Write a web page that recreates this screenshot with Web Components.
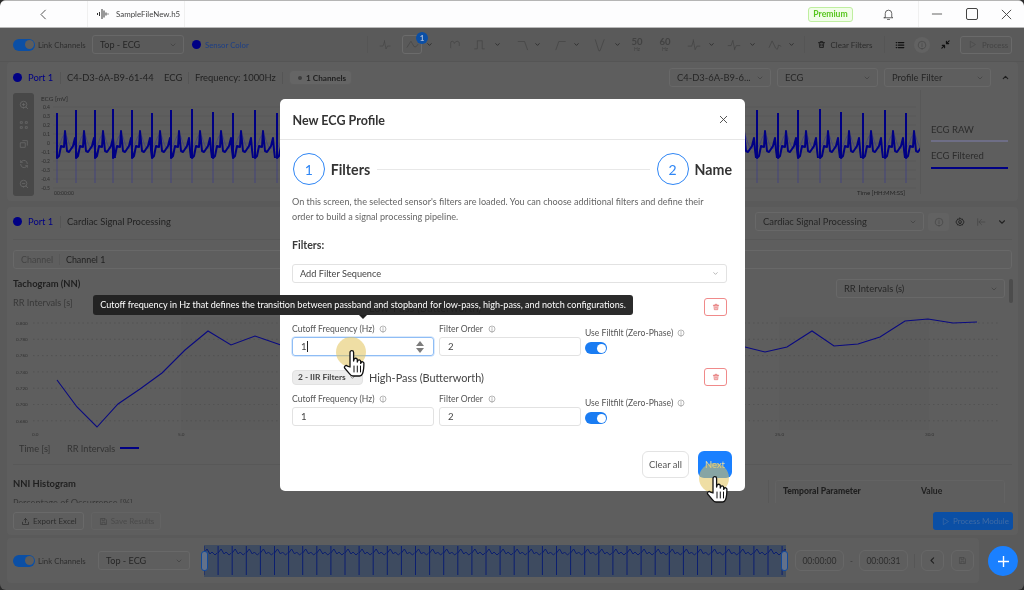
<!DOCTYPE html>
<html lang="en">
<head>
<meta charset="utf-8">
<title>New ECG Profile</title>
<style>
  html, body { margin: 0; padding: 0; background: #2b2b2b; }
  body { font-family: Lato, "Open Sans", sans-serif; width: 1024px; height: 590px; overflow: hidden; }
</style>
</head>
<body>
<app-shell></app-shell>
<script>
// small inline icons, 24 box
const ICONS = {
  back: 'M15 5l-7 7 7 7',
  down: 'M6 9l6 6 6-6',
  up: 'M6 15l6-6 6 6',
  close: 'M5 5l14 14M19 5L5 19',
  min: 'M4 12h16',
  bell: 'M6 17V10a6 6 0 0 1 12 0v7l2 1H4zM10 21h4',
  trash: 'M4 7h16M9 7V4h6v3M6 7l1 13h10l1-13M10 11v5M14 11v5',
  info: 'M12 21a9 9 0 1 0 0-18 9 9 0 0 0 0 18zM12 11v5M12 7.6v.4',
  list: 'M8 6h13M8 12h13M8 18h13M3 6h1M3 12h1M3 18h1',
  collapse: 'M20 4l-6 6M14 5v5h5M4 20l6-6M10 19v-5H5',
  play: 'M7 4l13 8-13 8z',
  gear: 'M12 15.5a3.5 3.5 0 1 0 0-7 3.5 3.5 0 0 0 0 7zM12 2.5l2.2 2.8 3.5-.6 1 3.4 3 1.9-1.5 2 1.5 2-3 1.9-1 3.4-3.5-.6-2.2 2.8-2.2-2.8-3.5.6-1-3.4-3-1.9 1.5-2-1.5-2 3-1.9 1-3.4 3.5.6z',
  skip: 'M4 4v16M21 12H8M13 6l-6 6 6 6',
  upload: 'M12 15V4M8 8l4-4 4 4M4 14v6h16v-6',
  save: 'M5 4h11l4 4v12H5zM8 4v5h7V4M8 20v-6h8v6',
  zoomin: 'M11 19a8 8 0 1 0 0-16 8 8 0 0 0 0 16zM21 21l-4.5-4.5M8 11h6M11 8v6',
  zoomout: 'M11 19a8 8 0 1 0 0-16 8 8 0 0 0 0 16zM21 21l-4.5-4.5M8 11h6',
  expand: 'M4 4h4v4H4zM16 4h4v4h-4zM4 16h4v4H4zM16 16h4v4h-4z',
  crop: 'M9 4h11v11M4 9h11v11H4z',
  reset: 'M20 11a8 8 0 0 0-14-5l-2 2M4 4v4h4M4 13a8 8 0 0 0 14 5l2-2M20 20v-4h-4',
  sine: 'M2 17L9 6l6 10q3 3 7-4',
  lowbump: 'M3 18V9q0-3 3-3t4 4q2-4 5-4t4 3v5',
  band: 'M3 20h5V5h9v15h4',
  lp: 'M2 6h11l5 14',
  hp: 'M5 20l5-14h11',
  notch: 'M4 3l6 19h2l7-19',
  peak: 'M2 14h6l3-9 3 15 3-6h5M11 3v3',
  peak2: 'M2 13h5l3 -9 3 15 3-6h6M13 17v3',
  wave: 'M2 16L7 5l6 12q3 5 4 0l1-5 4 2'
};
function icon(name, size, color, sw) {
  return `<svg width="${size}" height="${size}" viewBox="0 0 24 24" fill="none" stroke="${color || 'currentColor'}" stroke-width="${sw || 2}" stroke-linecap="round" stroke-linejoin="round" style="display:block;flex:none"><path d="${ICONS[name]}"/></svg>`;
}

class UiToggle extends HTMLElement {
  connectedCallback() {
    const c = this.getAttribute('color') || '#1a7cf2';
    this.attachShadow({ mode: 'open' }).innerHTML = `
      <style>
        :host { display: block; width: 22px; height: 12px; border-radius: 6px; background: ${c}; position: relative; flex: none; }
        i { position: absolute; right: 1.5px; top: 1.5px; width: 9px; height: 9px; border-radius: 50%; background: ${this.getAttribute('knob') || '#fff'}; }
      </style><i></i>`;
  }
}
customElements.define('ui-toggle', UiToggle);

class UiSelect extends HTMLElement {
  connectedCallback() {
    this.attachShadow({ mode: 'open' }).innerHTML = `
      <style>
        :host { display: flex; align-items: center; justify-content: space-between; box-sizing: border-box; height: 19px; padding: 0 6px 0 7px;
                border: 1px solid #686868; border-radius: 3px; font-size: 9.4px; color: #262626; flex: none; white-space: nowrap; overflow: hidden; }
        svg { margin-left: 4px; }
      </style>
      <slot></slot>${icon('down', 8, '#3e3e3e')}`;
  }
}
customElements.define('ui-select', UiSelect);

class TitleBar extends HTMLElement {
  connectedCallback() {
    this.attachShadow({ mode: 'open' }).innerHTML = `
      <style>
        :host { display: flex; align-items: center; height: 28px; box-sizing: border-box; background: #fdfdfe; border-top: 1px solid #b5b5b5; border-bottom: 1px solid #b9b9b9; border-radius: 5px 5px 0 0; color: #333; }
        .back { width: 88px; box-sizing: border-box; display: flex; justify-content: center; border-right: 1px solid #f0f0f0; height: 100%; align-items: center; }
        .file { width: 97px; height: 100%; box-sizing: border-box; display: flex; align-items: center; gap: 7px; padding-left: 9px; border-right: 1px solid #f0f0f0; font-size: 7.9px; color: #444; }
        .grow { flex: 1; }
        .premium { width: 45px; height: 15px; box-sizing: border-box; border: 1px solid #bfeea0; background: #f1fde8; border-radius: 3px; color: #58c61e; font-size: 8.6px; font-weight: 700; display: flex; align-items: center; justify-content: center; margin-right: 29px; }
        .bell { margin-right: 23px; }
        .sep { width: 1px; align-self: stretch; background: #f0f0f0; }
        .win { width: 35px; display: flex; justify-content: center; }
        .max { width: 10px; height: 10px; border: 1px solid #444; border-radius: 2px; }
      </style>
      <div class="back">${icon('back', 15, '#555', 1.6)}</div>
      <div class="file">
        <svg width="12" height="12" viewBox="0 0 12 12" stroke="#333" stroke-width="1"><path d="M.5 5v2M2.5 4v4M5 1v10M7 2.5v7M9 4.5v3M11 5.5v1"/></svg>
        <span>SampleFileNew.h5</span>
      </div>
      <div class="grow"></div>
      <div class="premium">Premium</div>
      <div class="bell">${icon('bell', 13, '#444', 1.5)}</div>
      <div class="sep"></div>
      <div class="win">${icon('min', 14, '#444', 1.4)}</div>
      <div class="win"><div class="max"></div></div>
      <div class="win">${icon('close', 15, '#444', 1.5)}</div>`;
  }
}
customElements.define('title-bar', TitleBar);

class FilterToolbar extends HTMLElement {
  connectedCallback() {
    // [centre x, width, markup] in page order
    const ic = (n, s) => icon(n, s || 13, '#454545', 1.3);
    const chev = icon('down', 7, '#2d2d2d', 3);
    const hz = n => `<div class="hz"><b>${n}</b><span>Hz</span></div>`;
    const items = [
      [385, 12, ic('peak', 12)],
      [412, 20, `<div class="boxed">${ic('sine')}<em>1</em></div>`], [429, 7, chev],
      [455, 13, ic('lowbump')],
      [479, 13, ic('band')], [497, 7, chev],
      [524, 14, ic('lp', 14)], [537, 7, chev],
      [560, 14, ic('hp', 14)], [576, 7, chev],
      [600, 14, ic('notch', 14)], [617, 7, chev],
      [637, 14, hz(50)], [665, 14, hz(60)],
      [694, 14, ic('peak', 14)], [711, 7, chev],
      [734, 14, ic('peak2', 14)], [752, 7, chev],
      [775, 14, ic('wave', 14)], [791, 7, chev]
    ];
    let right = 368;
    const tools = items.map(([cx, w, html]) => {
      const left = cx - w / 2, m = left - right;
      right = left + w;
      return `<div style="margin-left:${m}px;width:${w}px">${html}</div>`;
    }).join('');
    this.attachShadow({ mode: 'open' }).innerHTML = `
      <style>
        :host { display: flex; align-items: center; height: 34px; box-sizing: border-box; padding: 0 12px 0 13px; font-size: 7.8px; color: #2b2b2b; border-bottom: 1px solid #555; }
        .lbl { margin-left: 3px; width: 54px; color: #2e2e2e; white-space: nowrap; }
        ui-select { width: 92px; height: 19px; font-size: 9.1px; }
        .dot { width: 9px; height: 9px; border-radius: 50%; background: #000084; margin-left: 8px; }
        .sc { margin-left: 4px; width: 162px; color: #1d3f86; white-space: nowrap; }
        .s { width: 1px; height: 17px; background: #555; flex: none; }
        .boxed { width: 20px; height: 19px; box-sizing: border-box; border: 1px solid #6b6b6b; border-radius: 3px; display: flex; align-items: center; justify-content: center; position: relative; }
        em { position: absolute; right: -7px; top: -4px; width: 12px; height: 12px; border-radius: 50%; background: #0b4fa5; color: #a9b9d4; font: 700 8px/12px Lato, sans-serif; text-align: center; }
        .hz { text-align: center; color: #424242; line-height: 1; }
        .hz b { display: block; font-size: 9.5px; }
        .hz span { display: block; font-size: 5px; }
        .clear { display: flex; align-items: center; gap: 5px; margin-left: 12px; width: 67px; white-space: nowrap; font-size: 8px; }
        .r { display: flex; align-items: center; }
        .info { width: 16px; height: 16px; border-radius: 50%; background: #626262; display: flex; align-items: center; justify-content: center; margin: 0 10px 0 9px; }
        .proc { display: flex; align-items: center; gap: 5px; width: 52px; height: 18px; box-sizing: border-box; border: 1px solid #6a6a6a; border-radius: 3px; padding-left: 7px; color: #444; margin-left: 9.5px; font-size: 7.8px; }
      </style>
      <ui-toggle color="#0b4fa5" knob="#5d5d5d"></ui-toggle><span class="lbl">Link Channels</span>
      <ui-select>Top - ECG</ui-select>
      <span class="dot"></span><span class="sc">Sensor Color</span>
      <span class="s"></span>
      ${tools}
      <span class="s" style="margin-left:9px"></span>
      <div class="clear">${icon('trash', 9, '#1f1f1f', 2.4)}<span>Clear Filters</span></div>
      <span class="s"></span>
      <div class="r" style="margin-left:10px">${icon('list', 10, '#111', 3)}</div>
      <div class="info">${icon('info', 10, '#464646', 1.6)}</div>
      <div class="r">${icon('collapse', 11, '#111', 2.4)}</div>
      <div class="proc">${icon('play', 9, '#474747', 1.6)}Process</div>`;
  }
}
customElements.define('filter-toolbar', FilterToolbar);

class EcgChart extends HTMLElement {
  connectedCallback() {
    const beats = [57, 76, 95, 113, 132, 152, 171, 192, 213, 233, 255, 277, 298, 320, 715, 736, 757, 778, 798, 820, 841, 863, 885, 906];
    const tops = [113, 110, 110, 109, 110, 113, 110, 109, 112, 113, 110, 113];
    let f = '', raw = '';
    beats.forEach((x, i) => {
      const top = tops[i % tops.length];
      const n = x + 20;
      f += `M${x} ${top}L${x} 158L${x + 2} 156L${x + 4} 146L${x + 7} 147L${x + 8} 131L${x + 10} 151L${x + 12} 152L${x + 16} 146L${x + 18} 138L${x + 19} 150L${n} 158`;
      raw += `M${x} ${top + 8}L${x} 183M${x} 148L${x + 3} 144Q${x + 7} 130 ${x + 10} 137Q${x + 13} 148 ${x + 16} 149L${x + 18} 141L${n} 150`;
    });
    let grid = '', labels = '';
    ['0.4', '0.3', '0.2', '0.1', '0', '-0.1', '-0.2', '-0.3', '-0.4', '-0.5'].forEach((t, i) => {
      const y = 107 + i * 9;
      grid += `<path d="M53 ${y}H916" stroke="#565656" stroke-width=".6"/>`;
      labels += `<text x="50" y="${y + 1.8}" text-anchor="end" font-size="5" fill="#2d2d2d">${t}</text>`;
    });
    this.attachShadow({ mode: 'open' }).innerHTML = `
      <style>:host { display: block; width: 884px; height: 110px; flex: none; } svg { display: block; font-family: Lato, sans-serif; }</style>
      <svg width="884" height="110" viewBox="36 90 884 110">
        ${grid}${labels}
        <text x="41" y="101" font-size="6.4" fill="#2b2b2b">ECG [mV]</text>
        <path d="${raw}" fill="none" stroke="#45457c" stroke-width="1"/>
        <path d="${f}" fill="none" stroke="#000084" stroke-width="2" stroke-linejoin="round"/>
        <text x="54" y="195" font-size="5" fill="#2b2b2b">00:00:00</text>
        <text x="857" y="195" font-size="6" fill="#262626">Time [HH:MM:SS]</text>
      </svg>`;
  }
}
customElements.define('ecg-chart', EcgChart);

class PortCard extends HTMLElement {
  connectedCallback() {
    const tool = ['zoomin', 'expand', 'crop', 'reset', 'zoomout'].map(n => icon(n, 10, '#6c6c6c', 1.8)).join('');
    this.attachShadow({ mode: 'open' }).innerHTML = `
      <style>
        :host { display: block; box-sizing: border-box; height: 139px; margin: 0 6px 0 7px; padding: 0 6px; color: #222; border-radius: 4px; background: #5e5e5e; }
        .head { display: flex; align-items: center; height: 31px; font-size: 9.4px; }
        .dot { width: 9px; height: 9px; border-radius: 50%; background: #000084; margin-right: 6px; flex: none; }
        .port { color: #000084; width: 32px; }
        .d { width: 1px; height: 12px; background: #555; margin-right: 6px; }
        .mac { width: 97px; white-space: nowrap; }
        .ecg { width: 24px; }
        .fr { width: 87px; white-space: nowrap; }
        .chip { display: flex; align-items: center; gap: 4px; height: 15px; width: 63px; box-sizing: border-box; padding-left: 8px; background: #656565; border: 1px solid #5f5f5f; border-radius: 4px; font-size: 8.2px; font-weight: 700; }
        .chip i { width: 4px; height: 4px; border-radius: 50%; background: #3e3e3e; }
        .grow { flex: 1; }
        ui-select { margin-left: 6px; }
        .up { margin: 0 2.5px 0 9.5px; }
        .body { display: flex; align-items: flex-start; height: 108px; }
        .tool { width: 21px; height: 103px; margin-top: 0; border-radius: 3px; background: #484848; display: flex; flex-direction: column; align-items: center; justify-content: space-around; padding: 2px 0; box-sizing: border-box; flex: none; }
        ecg-chart { margin-left: 2px; margin-top: -3px; }
        .legend { border-left: 1px solid #585858; height: 104px; padding-left: 10px; font-size: 9.5px; color: #2c2c2c; flex: none; width: 78px; margin-top: -3px; }
        .legend div { margin-top: 34px; height: 16px; width: 77px; border-bottom: 2px solid #6e6e86; white-space: nowrap; }
        .legend div + div { margin-top: 8px; height: 16.5px; border-bottom-color: #000084; }
      </style>
      <div class="head">
        <span class="dot"></span><span class="port">Port 1</span><span class="d"></span>
        <span class="mac">C4-D3-6A-B9-61-44</span><span class="ecg">ECG</span><span class="d"></span>
        <span class="fr">Frequency: 1000Hz</span><span class="d"></span>
        <span class="chip"><i></i>1 Channels</span>
        <span class="grow"></span>
        <ui-select style="width:102px">C4-D3-6A-B9-6...</ui-select>
        <ui-select style="width:101px">ECG</ui-select>
        <ui-select style="width:107px">Profile Filter</ui-select>
        <span class="up">${icon('up', 9, '#1e1e1e', 3)}</span>
      </div>
      <div class="body">
        <div class="tool">${tool}</div>
        <ecg-chart></ecg-chart>
        <div class="legend"><div>ECG RAW</div><div>ECG Filtered</div></div>
      </div>`;
  }
}
customElements.define('port-card', PortCard);

class TachoChart extends HTMLElement {
  connectedCallback() {
    const pts = '57,380 77,407 97,427 118,404 140,389 162,373 185,350 208,331 231,345 255,336 278,344 300,352 320,340 745,347 765,352 787,347 812,331 834,346 858,344 880,337 905,321 928,319 953,323 977,322';
    let grid = '', labels = '';
    ['0.800', '0.780', '0.760', '0.740', '0.720', '0.700', '0.680'].forEach((t, i) => {
      const y = 323 + i * 16.3;
      grid += `<path d="M33 ${y}H1000" stroke="#4e4e4e" stroke-width=".7" stroke-dasharray="1.5 3"/>`;
      labels += `<text x="16" y="${y + 1.8}" font-size="4.6" fill="#333">${t}</text>`;
    });
    this.attachShadow({ mode: 'open' }).innerHTML = `
      <style>:host { display: block; height: 122px; margin-top: 6px; } svg { display: block; font-family: Lato, sans-serif; }</style>
      <svg width="997" height="122" viewBox="13 316 997 122">
        <rect x="181" y="317" width="150" height="113" fill="#5c5c5c"/>
        <rect x="779" y="317" width="150" height="113" fill="#5c5c5c"/>
        ${grid}${labels}
        <polyline points="${pts}" fill="none" stroke="#0a0a80" stroke-width="1.1"/>
        <text x="32" y="436" font-size="4.6" fill="#333">0.0</text>
        <text x="178" y="436" font-size="4.6" fill="#333">5.0</text>
        <text x="775" y="436" font-size="4.6" fill="#333">25.0</text>
        <text x="925" y="436" font-size="4.6" fill="#333">30.0</text>
      </svg>`;
  }
}
customElements.define('tacho-chart', TachoChart);

class SignalCard extends HTMLElement {
  connectedCallback() {
    this.attachShadow({ mode: 'open' }).innerHTML = `
      <style>
        :host { display: block; box-sizing: border-box; height: 328px; margin: 6px 6px 0 7px; padding: 0 6px; color: #222; border-radius: 4px; background: #5e5e5e; position: relative; }
        .head { display: flex; align-items: center; height: 33px; box-sizing: border-box; padding-bottom: 3px; border-bottom: 1px solid #585858; font-size: 9.4px; }
        .dot { width: 9px; height: 9px; border-radius: 50%; background: #000084; margin-right: 6px; flex: none; }
        .port { color: #000084; width: 32px; }
        .d { width: 1px; height: 12px; background: #555; margin-right: 6px; }
        .grow { flex: 1; }
        .ic { display: flex; align-items: center; justify-content: center; width: 21px; }
        .chan { display: flex; align-items: center; height: 19px; margin: 10px 0 0; width: 999px; box-sizing: border-box; border: 1px solid #686868; border-radius: 3px; font-size: 8.9px; padding: 0 7px; }
        .chan span { color: #434343; padding-right: 6px; border-right: 1px solid #585858; margin-right: 6px; }
        .t { font-size: 9.4px; line-height: 10px; font-weight: 700; color: #1f1f1f; }
        .row { display: flex; justify-content: space-between; align-items: flex-start; height: 18px; margin-top: 10px; width: 992px; }
        .sub { font-size: 9.2px; color: #383838; height: 13px; white-space: nowrap; }
        .legend { display: flex; align-items: center; font-size: 9.2px; color: #333; height: 18px; margin: 1px 0 0 6px; }
        .legend i { width: 19px; height: 2px; background: #000084; margin-left: 5px; }
        .line { height: 1px; background: #585858; margin-top: 7px; }
        .hist { display: flex; justify-content: space-between; height: 36px; overflow: hidden; margin-top: 2px; }
        .hist .l { padding-top: 12px; }
        .hist .sub { margin-top: 8px; }
        .wrap { margin: 13px 7px 0 0; border-left: 1px solid #585858; padding-left: 6px; }
        .table { width: 230px; height: 30px; box-sizing: border-box; border: 1px solid #636363; border-radius: 3px; display: flex; align-items: flex-start; padding: 5px 7px 0; font-size: 8.6px; font-weight: 700; color: #1f1f1f; }
        .table b { width: 138px; }
        .acts { display: flex; gap: 7px; align-items: center; margin-top: 9px; }
        .btn { height: 18px; box-sizing: border-box; border: 1px solid #696969; border-radius: 3px; display: flex; align-items: center; gap: 3px; font-size: 8px; padding: 0 6px 0 7px; color: #2c2c2c; white-space: nowrap; }
        .off { color: #4b4b4b; border-color: #636363; }
        .pm { margin-left: auto; margin-right: -1px; background: #0b4fa5; border: 0; color: #3f6ba5; width: 80px; padding-left: 8px; }
        .bar { position: absolute; right: 5px; top: 72px; width: 4px; height: 24px; border-radius: 2px; background: #4c4c4c; }
      </style>
      <div class="head">
        <span class="dot"></span><span class="port">Port 1</span><span class="d"></span>
        <span>Cardiac Signal Processing</span><span class="grow"></span>
        <ui-select style="width:169px">Cardiac Signal Processing</ui-select>
        <span class="ic" style="margin-left:4px;background:#626262;height:18px;border-radius:3px">${icon('info', 10, '#464646', 1.6)}</span>
        <span class="ic">${icon('gear', 10, '#222', 2)}</span>
        <span class="ic">${icon('skip', 10, '#464646', 1.8)}</span>
        <span class="ic">${icon('down', 10, '#222', 2.6)}</span>
      </div>
      <div class="chan"><span>Channel</span>Channel 1</div>
      <div class="row"><span class="t">Tachogram (NN)</span><ui-select style="width:169px">RR Intervals (s)</ui-select></div>
      <div class="sub">RR Intervals [s]</div>
      <tacho-chart></tacho-chart>
      <div class="legend"><span style="width:48px">Time [s]</span>RR Intervals<i></i></div>
      <div class="line"></div>
      <div class="hist">
        <div class="l"><div class="t">NNI Histogram</div><div class="sub">Percentage of Occurrence [%]</div></div>
        <div class="wrap"><div class="table"><b>Temporal Parameter</b>Value</div></div>
      </div>
      <div class="acts">
        <div class="btn">${icon('upload', 9, '#2c2c2c', 2)}Export Excel</div>
        <div class="btn off">${icon('save', 9, '#474747', 2)}Save Results</div>
        <div class="btn pm">${icon('play', 9, '#3f6ba5', 1.8)}Process Module</div>
      </div>
      <div class="bar"></div>`;
  }
}
customElements.define('signal-card', SignalCard);

class TimelineBar extends HTMLElement {
  connectedCallback() {
    let d = '';
    for (let x = 203; x < 785; x += 14.1) {
      const b = x.toFixed(1);
      d += `M${b} 546V575M${b} 553l3 -4l3 5l2 -2l3 3l2.1 -2`;
    }
    this.attachShadow({ mode: 'open' }).innerHTML = `
      <style>
        :host { display: flex; align-items: center; height: 45px; width: 972px; margin: 3px 0 0 7px; box-sizing: border-box; padding-left: 6px; background: #5e5e5e; border-radius: 4px; font-size: 7.8px; color: #2e2e2e; position: relative; }
        .lbl { margin-left: 3px; width: 60px; white-space: nowrap; }
        ui-select { width: 92px; font-size: 9.1px; }
        .strip { margin-left: 14px; width: 582px; height: 32px; flex: none; position: relative; background: #3e4b60; }
        .strip svg { display: block; }
        .h { position: absolute; top: 6px; width: 7px; height: 20px; box-sizing: border-box; border: 1px solid #124a9b; border-radius: 3px; background: #62718a; }
        .time { width: 49px; height: 21px; box-sizing: border-box; border: 1px solid #676767; border-radius: 6px; display: flex; align-items: center; justify-content: center; font-size: 8.6px; color: #2c2c2c; flex: none; }
        .dash { width: 15px; text-align: center; color: #333; }
        .sq { width: 23px; height: 21px; box-sizing: border-box; border: 1px solid #676767; border-radius: 6px; display: flex; align-items: center; justify-content: center; margin-left: 7px; flex: none; }
        .s { width: 1px; height: 14px; background: #565656; margin: 0 6px 0 6px; flex: none; }
      </style>
      <ui-toggle color="#0b4fa5" knob="#5d5d5d"></ui-toggle><span class="lbl">Link Channels</span>
      <ui-select>Top - ECG</ui-select>
      <div class="strip">
        <svg width="582" height="32" viewBox="203 545 582 32"><path d="${d}" fill="none" stroke="#0c1f70" stroke-width="1"/></svg>
        <span class="h" style="left:-3px"></span><span class="h" style="right:-2px"></span>
      </div>
      <span class="time" style="margin-left:9px">00:00:00</span><span class="dash">-</span><span class="time">00:00:31</span>
      <span class="s"></span>
      <span class="sq" style="margin-left:0">${icon('back', 9, '#222', 3)}</span>
      <span class="sq">${icon('save', 9, '#4a4a4a', 2)}</span>`;
  }
}
customElements.define('timeline-bar', TimelineBar);

class NumField extends HTMLElement {
  connectedCallback() {
    const active = this.hasAttribute('active');
    this.attachShadow({ mode: 'open' }).innerHTML = `
      <style>
        :host { display: block; font-size: 8.6px; color: #555; padding-top: .5px; }
        .l { display: flex; align-items: center; gap: 5px; height: 12px; margin-bottom: 2.5px; white-space: nowrap; }
        .i { display: flex; align-items: center; box-sizing: border-box; height: 19px; padding: 0 9px 0 8px; border: 1px solid ${active ? '#8fbdf5' : '#e2e2e2'}; border-radius: 3px; color: #444; font-size: 9.6px; justify-content: space-between; ${active ? 'box-shadow: 0 0 0 .5px #b7d5fa;' : ''} }
        .caret { border-left: 1px solid #222; display: inline-block; height: 11px; margin-left: .5px; vertical-align: -2px; }
        .sp { display: flex; flex-direction: column; gap: 2px; }
        .sp i { width: 0; height: 0; border: 4px solid transparent; border-width: 5px 4px; display: block; }
        .sp i:first-child { border-top: 0; border-bottom-color: #7c7c7c; }
        .sp i:last-child { border-bottom: 0; border-top-color: #7c7c7c; }
      </style>
      <div class="l"><slot></slot>${icon('info', 8, '#777', 1.6)}</div>
      <div class="i"><span>${this.getAttribute('value')}${active ? '<span class="caret"></span>' : ''}</span>${active ? '<span class="sp"><i></i><i></i></span>' : ''}</div>`;
  }
}
customElements.define('num-field', NumField);

class FilterBlock extends HTMLElement {
  connectedCallback() {
    const active = this.hasAttribute('active') ? 'active' : '';
    this.attachShadow({ mode: 'open' }).innerHTML = `
      <style>
        :host { display: block; }
        .h { display: flex; align-items: center; height: 18px; }
        .chip { display: flex; align-items: center; gap: 3px; width: 71px; height: 15px; box-sizing: border-box; padding-left: 5px; background: #ececec; border: 1px solid #e2e2e2; border-radius: 4px; font-size: 8.4px; font-weight: 700; color: #444; white-space: nowrap; }
        .name { margin-left: 6px; font-size: 10.9px; color: #444; }
        .del { margin-left: auto; width: 23px; height: 18px; box-sizing: border-box; border: 1px solid #f08a8a; border-radius: 3px; display: flex; align-items: center; justify-content: center; }
        .f { display: grid; grid-template-columns: 142px 142px 1fr; column-gap: 5px; margin-top: 6px; }
        .u { padding-top: 5px; font-size: 8.6px; color: #555; margin-left: -1px; }
        .u div { display: flex; align-items: center; gap: 4px; height: 12px; margin-bottom: 3px; white-space: nowrap; }
      </style>
      <div class="h">
        <span class="chip">${this.getAttribute('seq')}${icon('down', 7, '#777', 2.6)}</span>
        <span class="name"><slot></slot></span>
        <span class="del">${icon('trash', 8, '#e36a6a', 2.2)}</span>
      </div>
      <div class="f">
        <num-field value="1" ${active}>Cutoff Frequency (Hz)</num-field>
        <num-field value="2">Filter Order</num-field>
        <div class="u"><div>Use Filtfilt (Zero-Phase)${icon('info', 8, '#777', 1.6)}</div><ui-toggle></ui-toggle></div>
      </div>`;
  }
}
customElements.define('filter-block', FilterBlock);

class ProfileModal extends HTMLElement {
  connectedCallback() {
    this.attachShadow({ mode: 'open' }).innerHTML = `
      <style>
        :host { position: absolute; left: 280px; top: 99px; width: 465px; height: 392px; box-sizing: border-box; background: #fff; border-radius: 5px; color: #333; }
        header { display: flex; align-items: center; justify-content: space-between; height: 41px; box-sizing: border-box; padding: 2px 16px 0 12.5px; border-bottom: 1px solid #e6e6e6; font-size: 12.5px; font-weight: 700; color: #333; }
        header svg { margin-top: -2px; }
        main { padding: 13px 13px 0 12px; }
        .steps { display: flex; align-items: center; height: 32px; margin-left: .7px; font-size: 14.2px; font-weight: 700; color: #333; }
        .c { width: 32px; height: 32px; box-sizing: border-box; border: 1.2px solid #2f86f5; border-radius: 50%; display: flex; align-items: center; justify-content: center; color: #2f86f5; font-size: 14px; font-weight: 400; margin-right: 6px; }
        .ln { flex: 1; height: 1px; background: #e8e8e8; margin: 0 7px; }
        p { margin: 10px 0 0; font-size: 9.1px; line-height: 14.6px; color: #666; width: 430px; }
        h4 { margin: 14px 0 0; font-size: 10.6px; line-height: 14px; font-weight: 700; color: #3a3a3a; }
        .add { display: flex; align-items: center; justify-content: space-between; width: 435px; height: 19px; margin-top: 12px; padding: 0 7px; box-sizing: border-box; border: 1px solid #e2e2e2; border-radius: 3px; font-size: 9.2px; color: #444; }
        filter-block { width: 435px; }
        .a { margin-top: 15px; }
        .b { margin-top: 12px; }
        footer { display: flex; justify-content: flex-end; gap: 9px; margin-top: 25px; }
        button { font: inherit; font-size: 9.4px; height: 27px; border-radius: 6px; padding: 0; }
        .clear { width: 47px; background: #fff; border: 1px solid #e3e3e3; color: #555; }
        .next { width: 34px; background: #1a80ff; border: 0; color: #e9dca0; }
        .tip { position: absolute; left: -187px; top: 196px; width: 540px; height: 20px; box-sizing: border-box; background: rgba(32, 32, 32, .95); border-radius: 3px; color: #fff; font-size: 9.06px; line-height: 20px; text-align: center; white-space: nowrap; }
        .tip::after { content: ""; position: absolute; left: 266px; top: 20px; border: 4px solid transparent; border-top-color: #222; border-bottom: 0; }
      </style>
      <header><span>New ECG Profile</span>${icon('close', 11, '#444', 2)}</header>
      <main>
        <div class="steps"><span class="c">1</span>Filters<span class="ln"></span><span class="c">2</span>Name</div>
        <p>On this screen, the selected sensor's filters are loaded. You can choose additional filters and define their order to build a signal processing pipeline.</p>
        <h4>Filters:</h4>
        <div class="add">Add Filter Sequence${icon('down', 7, '#999', 2.4)}</div>
        <filter-block class="a" seq="1 - IIR Filters" active>Low-Pass (Butterworth)</filter-block>
        <filter-block class="b" seq="2 - IIR Filters">High-Pass (Butterworth)</filter-block>
        <footer><button class="clear">Clear all</button><button class="next">Next</button></footer>
      </main>
      <div class="tip">Cutoff frequency in Hz that defines the transition between passband and stopband for low-pass, high-pass, and notch configurations.</div>`;
  }
}
customElements.define('profile-modal', ProfileModal);

class HandCursor extends HTMLElement {
  connectedCallback() {
    this.attachShadow({ mode: 'open' }).innerHTML = `
      <style>
        :host { position: absolute; left: ${this.getAttribute('x')}px; top: ${this.getAttribute('y')}px; width: 30px; height: 30px; border-radius: 50%; background: rgba(225, 195, 90, .55); }
        svg { position: absolute; left: 6px; top: 12px; }
      </style>
      <svg width="26" height="30" viewBox="0 0 26 30" fill="#fff" stroke="#111" stroke-width="1.3" stroke-linejoin="round" stroke-linecap="round">
        <path d="M8 18V3.5a1.8 1.8 0 0 1 3.6 0V12l.4-1.6a1.7 1.7 0 0 1 3.3.3v2.4l.3-1.1a1.6 1.6 0 0 1 3.1.4v2l.3-.7a1.5 1.5 0 0 1 2.9.6c0 4-.3 7.5-1.3 10.2-.6 1.6-1.5 2.5-3 2.5H11c-1.5 0-2.4-.8-3.4-2.2L2.6 19c-1-1.5 1.3-3.4 2.8-1.9z"/>
        <path d="M12 17v6M15.3 17v6M18.5 17v6" fill="none" stroke-width="1"/>
      </svg>`;
  }
}
customElements.define('hand-cursor', HandCursor);

class AppShell extends HTMLElement {
  connectedCallback() {
    this.attachShadow({ mode: 'open' }).innerHTML = `
      <style>
        :host { display: block; position: relative; width: 1024px; height: 590px; overflow: hidden; background: #5a5a5a; border-radius: 6px; font-family: Lato, "Open Sans", sans-serif; filter: blur(.3px); }
        .fab { position: absolute; left: 988px; top: 546px; width: 30px; height: 30px; border-radius: 50%; background: #1a80ff; display: flex; align-items: center; justify-content: center; color: #fff; }
        .fab svg { display: block; }
      </style>
      <title-bar></title-bar>
      <filter-toolbar></filter-toolbar>
      <port-card></port-card>
      <signal-card></signal-card>
      <timeline-bar></timeline-bar>
      <div class="fab"><svg width="11" height="11" viewBox="0 0 11 11" stroke="#fff" stroke-width="1.4"><path d="M5.5 0v11M0 5.5h11"/></svg></div>
      <profile-modal></profile-modal>
      <hand-cursor x="336" y="337"></hand-cursor>
      <hand-cursor x="699" y="463"></hand-cursor>`;
  }
}
customElements.define('app-shell', AppShell);
</script>
</body>
</html>
